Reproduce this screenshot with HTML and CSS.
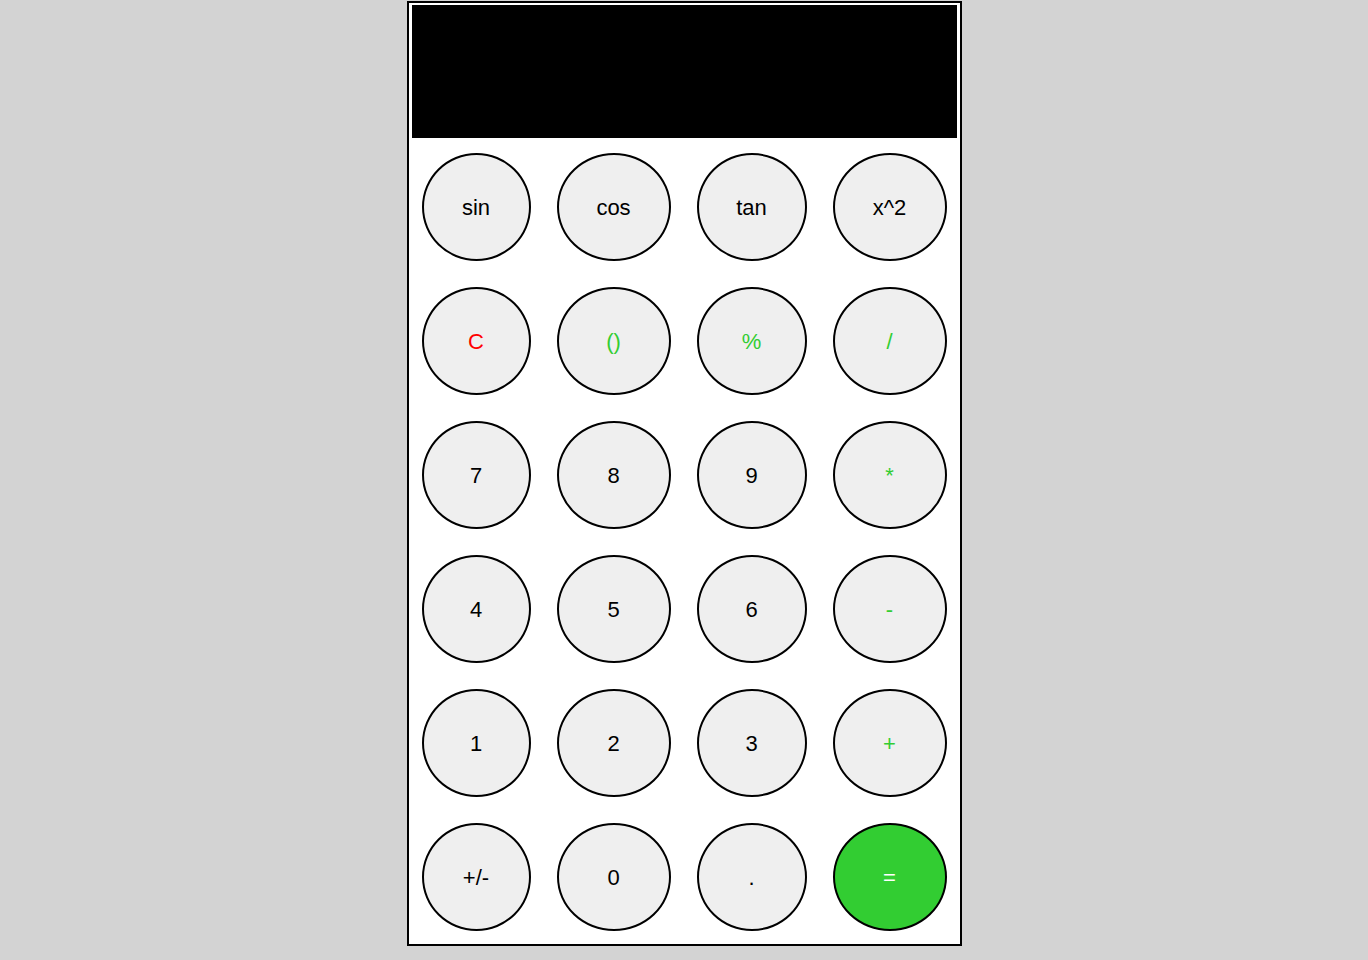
FILE: index.html
```html
<!DOCTYPE html>
<html>
<head>
<meta charset="utf-8">
<title>Calculator</title>
<link rel="stylesheet" href="styles.css">
</head>
<body>
<div class="calc">
  <div class="display"></div>
  <div class="keys">
    <button class="key">sin</button>
    <button class="key">cos</button>
    <button class="key">tan</button>
    <button class="key">x^2</button>
    <button class="key clear">C</button>
    <button class="key op">()</button>
    <button class="key op">%</button>
    <button class="key op">/</button>
    <button class="key">7</button>
    <button class="key">8</button>
    <button class="key">9</button>
    <button class="key op">*</button>
    <button class="key">4</button>
    <button class="key">5</button>
    <button class="key">6</button>
    <button class="key op">-</button>
    <button class="key">1</button>
    <button class="key">2</button>
    <button class="key">3</button>
    <button class="key op">+</button>
    <button class="key">+/-</button>
    <button class="key">0</button>
    <button class="key">.</button>
    <button class="key equals">=</button>
  </div>
</div>
</body>
</html>
```
FILE: styles.css
```css
html, body {
  margin: 0;
  padding: 0;
  background: #d3d3d3;
  font-family: "Liberation Sans", Arial, sans-serif;
}

.calc {
  box-sizing: border-box;
  width: 555px;
  margin: 1px auto 0;
  background: #ffffff;
  border: 2px solid #000000;
  padding: 2px 3px 13px 3px;
}

.display {
  height: 133px;
  background: #000000;
}

.keys {
  display: grid;
  grid-template-columns: 109px 114px 110px 114px;
  grid-auto-rows: 108px;
  column-gap: 26px;
  row-gap: 26px;
  padding: 15px 0 0 10px;
}

.key {
  box-sizing: border-box;
  width: 100%;
  height: 100%;
  margin: 0;
  padding: 1px 0 0 0;
  border: 2px solid #000000;
  border-radius: 50%;
  background: #efefef;
  color: #000000;
  font-family: "Liberation Sans", Arial, sans-serif;
  font-size: 22px;
  line-height: 1;
}

.op {
  color: #32cd32;
}

.clear {
  color: #ff0000;
}

.equals {
  background: #32cd32;
  color: #ffffff;
}
```
